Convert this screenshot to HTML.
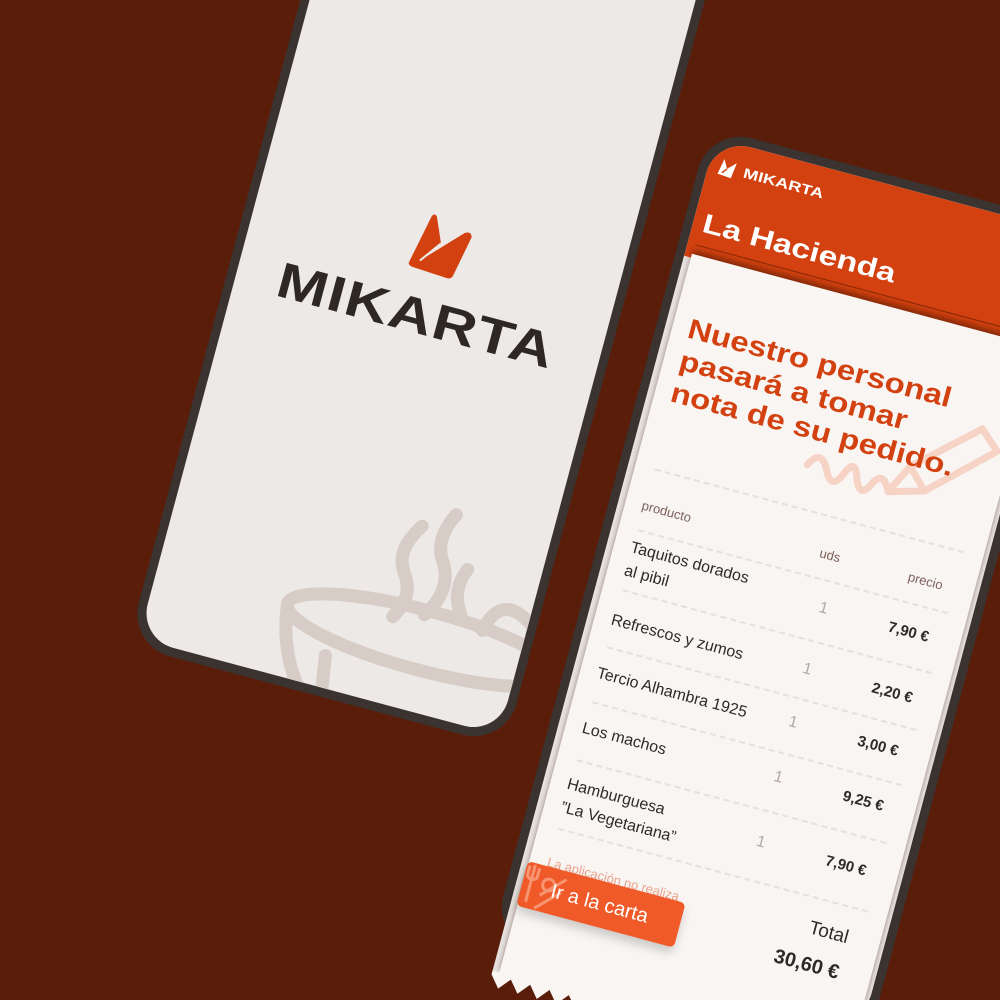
<!DOCTYPE html>
<html><head><meta charset="utf-8"><style>
*{margin:0;padding:0;box-sizing:border-box}
html,body{width:1000px;height:1000px;overflow:hidden}
body{background:#5a1d0a;font-family:"Liberation Sans",sans-serif;position:relative}
#clip{position:absolute;left:0;top:0;width:1000px;height:1000px;overflow:hidden}
#w{position:absolute;left:0;top:0;width:10px;height:10px;transform-origin:0 0;transform:rotate(15deg)}
.abs{position:absolute}
.ext{display:inline-block;transform-origin:0 50%;white-space:nowrap}
.dash{position:absolute;height:0;border-top:2px dashed #e6e0dd}
.row{position:absolute;font-size:16px;color:#2e2a28;line-height:24px;white-space:nowrap}
.q{position:absolute;font-size:16px;color:#b4aaa6;width:20px;text-align:center}
.p{position:absolute;font-size:15px;font-weight:bold;color:#2e2a28;right:0;text-align:right;white-space:nowrap}
</style></head><body>
<div id="clip">
<div id="w">
 <div class="abs" style="left:290px;top:-420px;width:391px;height:1010px;background:#3a332f;border-radius:44px">
  <div class="abs" style="left:9px;top:9px;right:9px;bottom:9px;background:#ece9e7;border-radius:36px;overflow:hidden">
   <svg class="abs" style="left:160px;top:502px" width="66" height="66" viewBox="0 0 66 66">
    <path d="M4 56 L14 6 Q16 2 19 5 L30 30 L14 52 L50 14 Q56 10 58 16 L50 58 Q49 62 45 62 L8 60 Q3 59 4 56Z" fill="#d2410f"/>
    <path d="M14 52 L30 30" stroke="#ece9e7" stroke-width="2"/>
   </svg>
   <div class="abs" style="left:42px;top:582px;font-size:50px;font-weight:bold;color:#2e2824;line-height:52px"><span class="ext" style="transform:scaleX(1.22);letter-spacing:1px">MIKARTA</span></div>
   <svg class="abs" style="left:0;top:730px" width="380" height="320" viewBox="0 0 380 320" fill="none" stroke="#d8ccc7" stroke-width="13" stroke-linecap="round">
    <ellipse cx="275" cy="190" rx="140" ry="30"/>
    <path d="M135 190 Q150 300 270 320 Q380 300 415 190"/>
    <path d="M185 230 L190 262"/>
    <path d="M205 285 L250 288"/>
    <path d="M245 80 Q225 110 240 130 Q255 150 240 175"/>
    <path d="M275 60 Q260 90 275 110 Q290 135 270 165"/>
    <path d="M300 110 Q290 135 305 155"/>
    <path d="M330 165 Q340 120 380 150"/>
   </svg>
  </div>
 </div>
 <div class="abs" style="left:718px;top:-61px;width:390px;height:840px;background:#3a332f;border-radius:44px">
  <div class="abs" style="left:9px;top:9px;right:9px;bottom:9px;background:#e9e5e2;border-radius:36px;overflow:hidden">
   <div class="abs" style="left:0;top:0;width:100%;height:150px;background:#d2410f"></div>
   <svg class="abs" style="left:10px;top:16px" width="20" height="20" viewBox="0 0 20 20"><path d="M1 18 L4 2 L9 11 L17 3 L15 19 Z" fill="#fff"/><path d="M5 16 L9 11" stroke="#d2410f" stroke-width="1.5"/></svg>
   <div class="abs" style="left:36px;top:16px;font-size:14px;font-weight:bold;color:#fff;line-height:20px"><span class="ext" style="transform:scaleX(1.3)">MIKARTA</span></div>
   <div class="abs" style="left:10px;top:68px;font-size:27px;font-weight:bold;color:#fff;line-height:34px"><span class="ext" style="transform:scaleX(1.25)">La Hacienda</span></div>
   <div class="abs" style="left:8px;top:108px;width:380px;border-top:1px solid #8a2a0a"></div>
  </div>
 </div>
 <div class="abs" style="left:727px;top:70px;width:370px;height:744px;background:#e8e4e1"></div>
 <div class="abs" style="left:734px;top:66px;width:360px;height:746px;background:#f8f5f3;box-shadow:0 -4px 6px rgba(60,20,5,.5)"></div>
 <svg class="abs" style="left:727px;top:810px" width="380" height="18" viewBox="0 0 380 18"><path d="M0 0 H380 V0 L370 16 L360 4 L350 16 L340 4 L330 16 L320 4 L310 16 L300 4 L290 16 L280 4 L270 16 L260 4 L250 16 L240 4 L230 16 L220 4 L210 16 L200 4 L190 16 L180 4 L170 16 L160 4 L150 16 L140 4 L130 16 L120 4 L110 16 L100 4 L90 16 L80 4 L70 16 L60 4 L50 16 L40 4 L30 16 L20 4 L10 16 L0 4Z" fill="#f8f5f3"/></svg>
 <svg class="abs" style="left:890px;top:140px" width="200" height="130" viewBox="0 0 200 130" fill="none" stroke="#f7d3c5" stroke-width="7" stroke-linecap="round" stroke-linejoin="round">
  <path d="M10 100 Q20 80 30 100 Q40 120 48 98 Q56 80 62 102 Q70 120 78 100 Q86 86 95 105"/>
  <path d="M95 105 L110 75 L170 20 L190 38 L130 95 Z"/>
  <path d="M110 75 L130 95"/>
 </svg>
 <div class="abs" style="left:750px;top:122px;font-size:28px;font-weight:bold;color:#d2410f;line-height:33px">
  <div><span class="ext" style="transform:scaleX(1.18)">Nuestro personal</span></div>
  <div><span class="ext" style="transform:scaleX(1.18)">pasará a tomar</span></div>
  <div><span class="ext" style="transform:scaleX(1.18)">nota de su pedido.</span></div>
 </div>
 <div class="dash" style="left:754px;top:283px;width:320px"></div>
 <div class="abs" style="left:751px;top:314px;font-size:13px;color:#7d6057">producto</div>
 <div class="abs" style="left:935px;top:314px;font-size:13px;color:#7d6057">uds</div>
 <div class="abs" style="left:1020px;top:314px;font-size:13px;color:#7d6057;width:42px;text-align:right">precio</div>
 <div class="dash" style="left:754px;top:346px;width:320px"></div>
 <div class="abs" style="left:751px;top:354px;width:311px;height:300px">
  <div class="row" style="top:0">Taquitos dorados<br>al pibil</div>
  <div class="q" style="left:192px;top:12px">1</div><div class="p" style="top:13px">7,90 €</div>
  <div class="row" style="top:75px">Refrescos y zumos</div>
  <div class="q" style="left:192px;top:75px">1</div><div class="p" style="top:76px">2,20 €</div>
  <div class="row" style="top:130px">Tercio Alhambra 1925</div>
  <div class="q" style="left:192px;top:130px">1</div><div class="p" style="top:131px">3,00 €</div>
  <div class="row" style="top:187px">Los machos</div>
  <div class="q" style="left:192px;top:187px">1</div><div class="p" style="top:188px">9,25 €</div>
  <div class="row" style="top:245px">Hamburguesa<br>”La Vegetariana”</div>
  <div class="q" style="left:192px;top:254px">1</div><div class="p" style="top:255px">7,90 €</div>
 </div>
 <div class="dash" style="left:754px;top:408px;width:320px"></div>
 <div class="dash" style="left:754px;top:467px;width:320px"></div>
 <div class="dash" style="left:754px;top:524px;width:320px"></div>
 <div class="dash" style="left:754px;top:584px;width:320px"></div>
 <div class="dash" style="left:754px;top:655px;width:320px"></div>
 <div class="abs" style="left:752px;top:683px;font-size:13px;color:#eba38d;white-space:nowrap">La aplicación no realiza</div>
 <div class="abs" style="left:980px;top:676px;width:82px;text-align:right;font-size:19px;color:#2e2a28">Total</div>
 <div class="abs" style="left:960px;top:712px;width:102px;text-align:right;font-size:20px;font-weight:bold;color:#2e2a28;white-space:nowrap">30,60 €</div>
 <div class="abs" style="left:733px;top:695px;width:163px;height:46px;background:#f05a28;border-radius:5px;box-shadow:0 6px 10px rgba(0,0,0,.18);overflow:hidden">
  <svg class="abs" style="left:0;top:0" width="50" height="46" viewBox="0 0 50 46" fill="none" stroke="#f79472" stroke-width="3"><path d="M8 2 V40 M3 4 V14 Q8 20 13 14 V4 M20 30 L42 8 M18 44 L40 22"/><circle cx="26" cy="18" r="6"/></svg>
  <div class="abs" style="left:30px;top:11px;font-size:20px;color:#fff;line-height:24px;white-space:nowrap">Ir a la carta</div>
 </div>
</div>
</div>
</body></html>
